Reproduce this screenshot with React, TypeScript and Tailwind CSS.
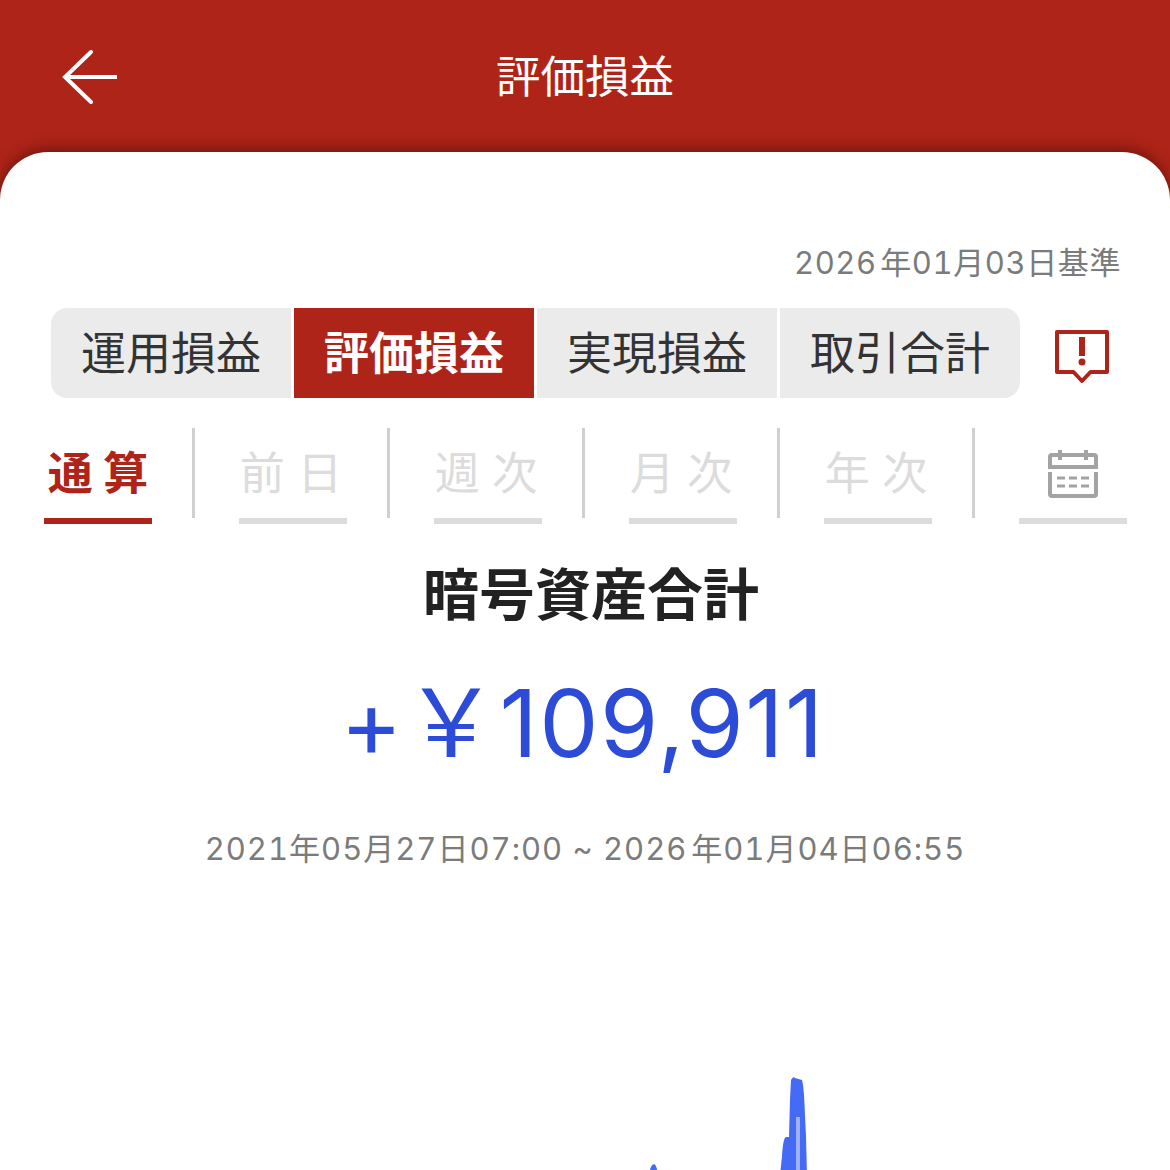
const FONT = "font-['Inter','Noto_Sans_CJK_JP',sans-serif]";

function BackArrow() {
  return (
    <svg width="56" height="56" viewBox="0 0 56 56" fill="none" stroke="#fff" strokeWidth="4" strokeLinejoin="miter">
      <path d="M29 3 L3 28 L29 53" strokeLinecap="round" />
      <path d="M3 28 H55" />
    </svg>
  );
}

function NoticeIcon() {
  return (
    <svg width="56" height="56" viewBox="0 0 56 56" fill="none">
      <path d="M3 3 H53 V43 H36.500 L28 52 L19.500 43 H3 Z" stroke="#ae2418" strokeWidth="4" strokeLinejoin="round" />
      <rect x="25" y="8" width="6" height="19" fill="#ae2418" />
      <circle cx="28" cy="33" r="3.500" fill="#ae2418" />
    </svg>
  );
}

function CalendarIcon() {
  return (
    <svg width="50" height="50" viewBox="0 0 50 50" fill="none" stroke="#a3a3a3" strokeWidth="4">
      <path d="M2 19 V9 Q2 7 4 7 H46 Q48 7 48 9 V19 H2 Z" />
      <path d="M2 24 V46 Q2 48 4 48 H46 Q48 48 48 46 V24" />
      <path d="M12 2 V12 M38 2 V12" />
      <path d="M9 30 H17 M21 30 H29 M33 30 H41 M9 38 H17 M21 38 H29 M33 38 H41" strokeWidth="3" />
    </svg>
  );
}

const segments = ["運用損益", "評価損益", "実現損益", "取引合計"];
const periods = ["前 日", "週 次", "月 次", "年 次"];

export default function App() {
  return (
    <div className={`${FONT} h-[1170px] w-[1170px] overflow-hidden bg-[#ae2418]`}>
      <header className="relative flex h-[152px] items-center justify-center">
        <span className="absolute left-[62px] top-[49px]"><BackArrow /></span>
        <h1 className="pt-[2px] text-[44.500px] leading-none text-white">評価損益</h1>
      </header>

      <main className="relative h-[1018px] rounded-t-[48px] bg-white shadow-[0_-3px_14px_rgba(60,10,5,0.55)]">
        <p className="pr-[49px] pt-[92px] text-right text-[31px] leading-[38px] tracking-[0.6px] tabular-nums text-[#7b7b7b]">
          2026{"\u200A"}年01月03日基準
        </p>

        <div className="mt-[26px] flex items-center pl-[51px]">
          <div className="flex h-[90px] w-[969px] gap-[3px] overflow-hidden rounded-[16px]">
            {segments.map((label, i) => (
              <div
                key={label}
                className={
                  i === 1
                    ? "flex w-[240px] items-center justify-center pt-[2px] text-[45px] font-bold text-white bg-[#ae2418]"
                    : "flex w-[240px] items-center justify-center pt-[2px] text-[45px] text-[#333333] bg-[#ebebeb]"
                }
              >
                {label}
              </div>
            ))}
          </div>
          <span className="ml-[34px] pt-[7px]"><NoticeIcon /></span>
        </div>

        <div className="mt-[30px] flex h-[96px] pl-[44px]">
          <div className="flex h-[96px] w-[108px] flex-col">
            <div className="flex h-[90px] items-center justify-center text-[45px] font-bold leading-none text-[#ae2418]">通 算</div>
            <div className="h-[6px] bg-[#ae2418]" />
          </div>
          {periods.map((label) => (
            <div key={label} className="flex">
              <div className="ml-[40px] h-[90px] w-[3px] bg-[#d0d0d0]" />
              <div className="ml-[44px] flex h-[96px] w-[108px] flex-col">
                <div className="flex h-[90px] items-center justify-center pr-[4px] text-[45px] leading-none text-[#dcdcdc]">{label}</div>
                <div className="h-[6px] bg-[#dcdcdc]" />
              </div>
            </div>
          ))}
          <div className="flex">
            <div className="ml-[40px] h-[90px] w-[3px] bg-[#d0d0d0]" />
            <div className="ml-[44px] flex h-[96px] w-[108px] flex-col">
              <div className="flex h-[90px] items-center justify-center"><CalendarIcon /></div>
              <div className="h-[6px] bg-[#dcdcdc]" />
            </div>
          </div>
        </div>

        <h2 className="mt-[36px] pl-[12px] text-center text-[56px] font-bold leading-[70px] text-[#222222]">暗号資産合計</h2>

        <p className="mt-[38px] pr-[5px] text-center text-[94px] leading-[110px] tracking-[1.5px] text-[#2c4bd6]">+￥109,911</p>

        <p className="mt-[52px] text-center text-[31px] leading-[38px] tracking-[1px] tabular-nums text-[#7b7b7b]">
          2021年05月27日07:00 ~ 2026{"\u200A"}年01月04日06:55
        </p>

        <svg className="mt-[208px] block" width="1170" height="100" viewBox="0 0 1170 100">
          <path d="M649 100 Q650 89 654 88 Q657 89 658 100 Z" fill="#456af5" />
          <path d="M780 100 L782 80 Q783 62 786 61 L789 61 L790 23 L791 4 Q793 0 795 2 L802 4 Q804 10 805 40 L806 60 L807 100 Z" fill="#456af5" />
          <path d="M796 41 H800 V100 H796 Z" fill="#9eb2f8" />
        </svg>
      </main>
    </div>
  );
}
